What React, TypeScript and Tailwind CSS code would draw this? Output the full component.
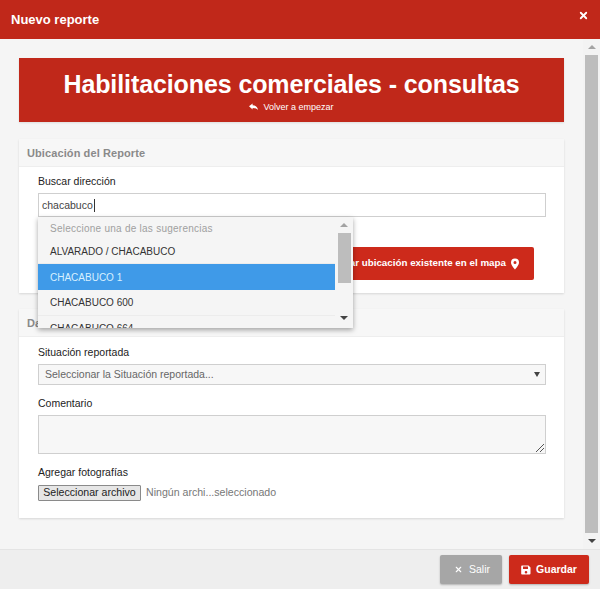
import { X } from "lucide-react";

const font = { fontFamily: '"Liberation Sans", Arial, sans-serif' };

function Scrollbar() {
  return (
    <div className="flex h-full w-[17px] shrink-0 flex-col items-center bg-[#f3f3f3]">
      <div className="flex h-[16px] w-full shrink-0 items-center justify-center">
        <div className="h-0 w-0 border-x-[4px] border-b-[4px] border-x-transparent border-b-[#a3a3a3]" />
      </div>
      <div className="w-[13px] flex-1 bg-[#bdbdbd]" />
      <div className="flex h-[16px] w-full shrink-0 items-center justify-center">
        <div className="h-0 w-0 border-x-[4px] border-t-[4px] border-x-transparent border-t-[#444444]" />
      </div>
    </div>
  );
}

export default function App() {
  return (
    <div style={font} className="flex h-[589px] w-[600px] flex-col overflow-hidden bg-[#f5f5f5] text-[12px] text-[#222222]">
      <header className="flex h-[39px] shrink-0 items-start justify-between bg-[#c0281a] pl-[11px] pr-[11px] text-white">
        <h1 className="mt-[12px] text-[13px] leading-[16px] font-bold">Nuevo reporte</h1>
        <X size={11} strokeWidth={4} className="mt-[10px]" />
      </header>

      <div className="flex h-[510px] shrink-0">
        <main className="min-w-0 flex-1 overflow-hidden pt-[19px] pl-[19px] pr-[19px]">
          <section className="flex h-[64px] flex-col items-center bg-[#c0281a] text-white shadow-[0_1px_2px_rgba(0,0,0,0.1)]">
            <h2 className="mt-[11px] text-[25px] leading-[30px] font-bold tracking-[-0.1px] whitespace-nowrap">Habilitaciones comerciales - consultas</h2>
            <div className="mt-[2px] flex items-center gap-[5px] text-[9px] leading-[12px]">
              <svg width="9" height="8" viewBox="0 0 9 8" fill="currentColor">
                <path d="M0 3.2 3.6.5v1.8C6.6 2.3 8.6 3.6 9 7.2 8 5.6 6.2 4.9 3.6 4.9v1.7Z" />
              </svg>
              <span>Volver a empezar</span>
            </div>
          </section>

          <section className="mt-[17px] h-[154px] bg-white shadow-[0_1px_2px_rgba(0,0,0,0.12)]">
            <div className="flex h-[28px] items-center border-b border-[#eeeeee] bg-[#f7f7f7] pt-px pl-[8px] text-[11px] font-bold tracking-[0.1px] text-[#8a8a8a]">
              Ubicación del Reporte
            </div>
            <div className="relative pt-[7px] pr-[18px] pl-[19px]">
              <label className="block text-[10.5px] leading-[14px] text-[#222222]">Buscar dirección</label>
              <div className="mt-[5px] flex h-[24px] items-center border border-[#cfcfcf] bg-white pt-px pl-[3px] text-[10.5px] text-[#444444]">
                chacabuco<span className="ml-px h-[13px] w-px bg-[#333333]" />
              </div>
              <div className="mt-[30px] flex justify-end pr-[12px]">
                <button className="flex h-[33px] w-[250px] items-center justify-end gap-[3px] rounded-[2px] bg-[#cd2a1b] pr-[13px] text-[9.8px] font-bold whitespace-nowrap text-white">
                  Marcar ubicación existente en el mapa
                  <svg width="12" height="12" viewBox="0 0 12 12" fill="currentColor">
                    <path fillRule="evenodd" d="M6 .5a4 4 0 0 0-4 4c0 2.6 3 6 4 7 1-1 4-4.400 4-7a4 4 0 0 0-4-4Zm0 2.500a1.500 1.500 0 1 1 0 3 1.500 1.500 0 0 1 0-3Z" />
                  </svg>
                </button>
              </div>

              <div className="absolute top-[50px] left-[19px] z-10 flex h-[111px] w-[315px] overflow-hidden bg-[#f5f5f5] shadow-[0_2px_5px_rgba(0,0,0,0.35)]">
                <ul className="min-w-0 flex-1 overflow-hidden text-[10px]">
                  <li className="flex h-[22px] items-center pl-[12px] tracking-[0.25px] text-[#a0a0a0]">Seleccione una de las sugerencias</li>
                  <li className="flex h-[25px] items-center border-b border-[#ececec] pl-[12px] text-[#333333]">ALVARADO / CHACABUCO</li>
                  <li className="flex h-[26px] items-center bg-[#3f9ae8] pl-[12px] text-[#d8f0ff]">CHACABUCO 1</li>
                  <li className="flex h-[26px] items-center border-b border-[#ececec] pl-[12px] text-[#333333]">CHACABUCO 600</li>
                  <li className="flex h-[25px] items-center pl-[12px] text-[#333333]">CHACABUCO 664</li>
                </ul>
                <div className="flex w-[18px] shrink-0 flex-col items-center">
                  <div className="flex h-[16px] w-full items-center justify-center">
                    <div className="h-0 w-0 border-x-[4px] border-b-[4px] border-x-transparent border-b-[#a3a3a3]" />
                  </div>
                  <div className="h-[50px] w-[13px] bg-[#bdbdbd]" />
                  <div className="flex-1" />
                  <div className="flex h-[20px] w-full items-center justify-center">
                    <div className="h-0 w-0 border-x-[4px] border-t-[4px] border-x-transparent border-t-[#444444]" />
                  </div>
                </div>
              </div>
            </div>
          </section>

          <section className="mt-[16px] h-[209px] bg-white shadow-[0_1px_2px_rgba(0,0,0,0.12)]">
            <div className="flex h-[28px] items-center border-b border-[#eeeeee] bg-[#f7f7f7] pt-px pl-[8px] text-[11px] font-bold tracking-[0.1px] text-[#8a8a8a]">
              Datos del Reporte
            </div>
            <div className="pt-[8px] pr-[18px] pl-[19px]">
              <label className="block text-[10.5px] leading-[14px]">Situación reportada</label>
              <div className="mt-[5px] flex h-[21px] items-center justify-between border border-[#cfcfcf] bg-[#f7f7f7] pr-[5px] pl-[6px] text-[10.5px] text-[#666666]">
                <span>Seleccionar la Situación reportada...</span>
                <div className="h-0 w-0 border-x-[3.5px] border-t-[5px] border-x-transparent border-t-[#444444]" />
              </div>
              <label className="mt-[11px] block text-[10.5px] leading-[14px]">Comentario</label>
              <div className="relative mt-[5px] h-[39px] border border-[#cfcfcf] bg-[#f7f7f7]">
                <svg className="absolute right-px bottom-px" width="9" height="9" viewBox="0 0 9 9" fill="none" stroke="#555555" strokeWidth="1">
                  <path d="M1 9 9 1M5 9l4-4" />
                </svg>
              </div>
              <label className="mt-[11px] block text-[10.5px] leading-[14px]">Agregar fotografías</label>
              <div className="mt-[6px] flex items-center text-[10.6px] text-[#777777]">
                <span className="flex h-[16px] w-[103px] items-center justify-center rounded-[1px] border border-[#8a8a8a] bg-[#e6e6e6] whitespace-nowrap text-[#222222]">Seleccionar archivo</span>
                <span className="ml-[5px]">Ningún archi...seleccionado</span>
              </div>
            </div>
          </section>
        </main>
        <Scrollbar />
      </div>

      <footer className="flex h-[40px] shrink-0 items-start justify-end gap-[7px] border-t border-[#e4e4e4] bg-[#eeeeee] pt-[5px] pr-[11px] text-[10.5px] text-white">
        <button className="flex h-[29px] w-[62px] items-center justify-center gap-[6px] rounded-[2px] bg-[#a6a6a6] pl-[2px] shadow-[0_1px_2px_rgba(0,0,0,0.25)]">
          <X size={9} strokeWidth={3} />
          Salir
        </button>
        <button className="flex h-[29px] w-[80px] items-center justify-center gap-[5px] rounded-[2px] bg-[#cd2a1b] font-bold shadow-[0_1px_2px_rgba(0,0,0,0.25)]">
          <svg width="10" height="10" viewBox="0 0 10 10" fill="currentColor">
            <path fillRule="evenodd" d="M1 .5h6.500L9.500 2.500V8.500a1 1 0 0 1-1 1H1a.8.8 0 0 1-.8-.8V1.300A.8.8 0 0 1 1 .5Zm1 1v2.500h5V1.500Zm3 4.500a1.300 1.300 0 1 0 0 2.600 1.300 1.300 0 0 0 0-2.600Z" />
          </svg>
          Guardar
        </button>
      </footer>
    </div>
  );
}
